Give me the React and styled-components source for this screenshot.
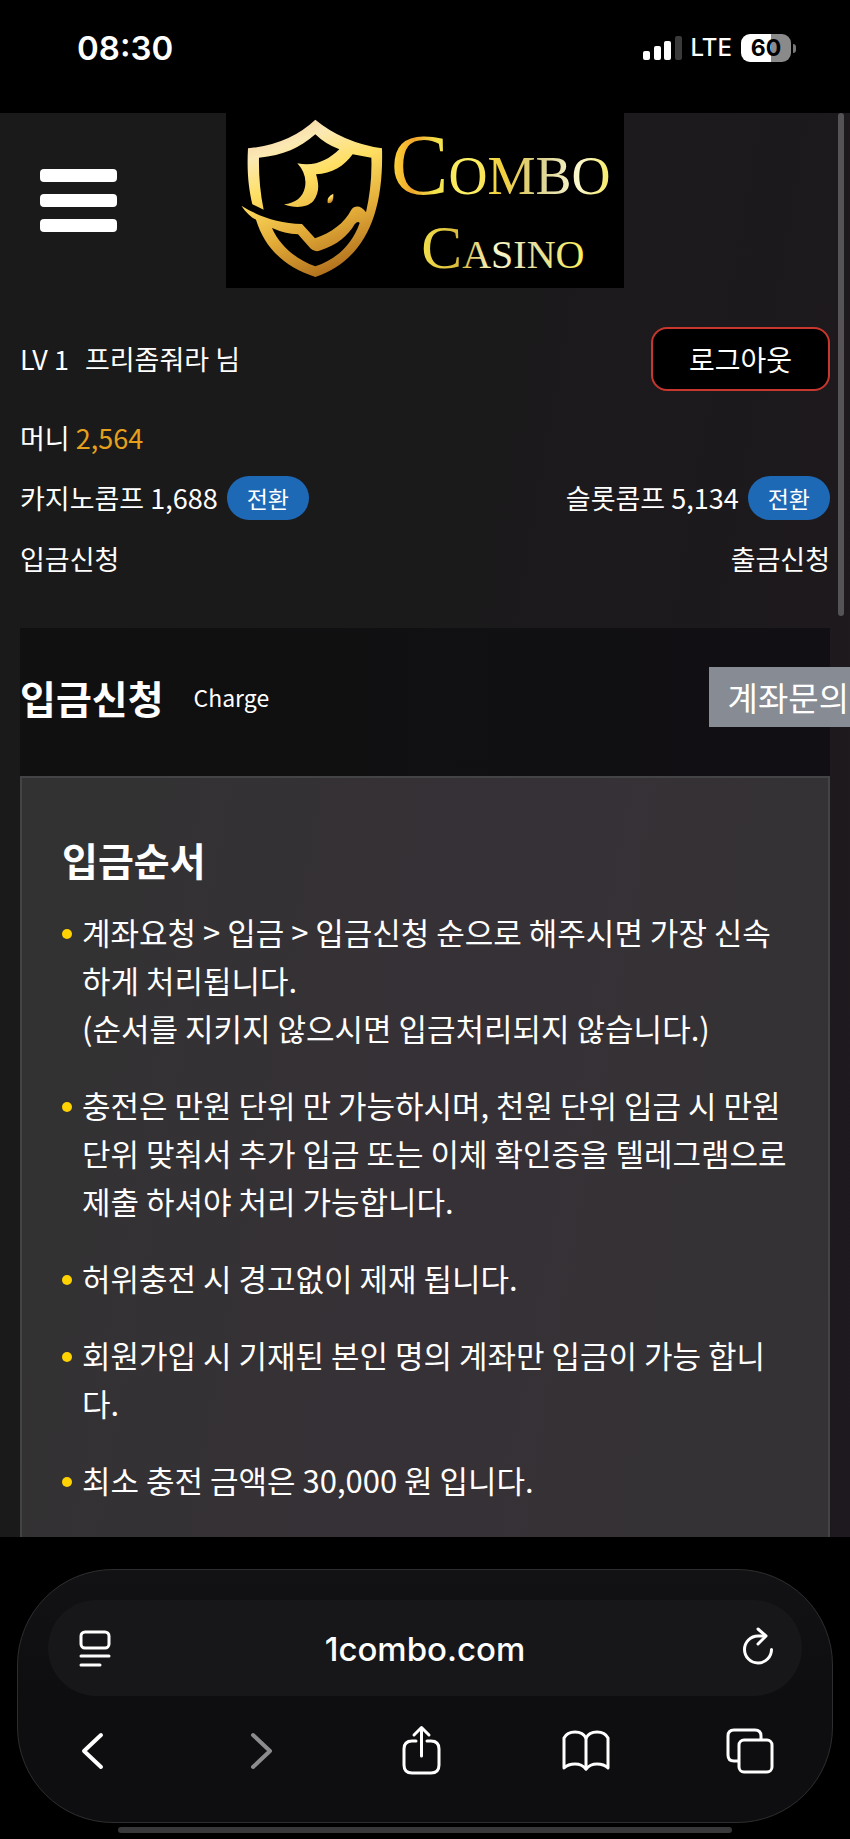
import React from "react";
import styled, { createGlobalStyle } from "styled-components";

const steps = [
  ["계좌요청 > 입금 > 입금신청 순으로 해주시면 가장 신속하게 처리됩니다.", "(순서를 지키지 않으시면 입금처리되지 않습니다.)"],
  ["충전은 만원 단위 만 가능하시며, 천원 단위 입금 시 만원 단위 맞춰서 추가 입금 또는 이체 확인증을 텔레그램으로 제출 하셔야 처리 가능합니다."],
  ["허위충전 시 경고없이 제재 됩니다."],
  ["회원가입 시 기재된 본인 명의 계좌만 입금이 가능 합니다."],
  ["최소 충전 금액은 30,000 원 입니다."],
];

function Logo() {
  return (
    <LogoSvg viewBox="18 24 1194 525" role="img" aria-label="Combo Casino">
      <defs>
        <linearGradient id="shield" x1="0.15" y1="0" x2="0.5" y2="1">
          <stop offset="0" stopColor="#f3c9a0" />
          <stop offset="0.2" stopColor="#fbe9b4" />
          <stop offset="0.42" stopColor="#ffdf62" />
          <stop offset="0.72" stopColor="#e3ac38" />
          <stop offset="1" stopColor="#b4741f" />
        </linearGradient>
        <linearGradient id="gold" gradientUnits="userSpaceOnUse" x1="510" y1="200" x2="1180" y2="240">
          <stop offset="0" stopColor="#ffd93a" />
          <stop offset="0.1" stopColor="#f0a52c" />
          <stop offset="0.2" stopColor="#f3e04a" />
          <stop offset="0.36" stopColor="#fff26a" />
          <stop offset="0.5" stopColor="#f2cf3c" />
          <stop offset="0.66" stopColor="#d9cf8a" />
          <stop offset="0.84" stopColor="#fbf8cf" />
          <stop offset="1" stopColor="#f6e95a" />
        </linearGradient>
        <linearGradient id="paleGold" gradientUnits="userSpaceOnUse" x1="600" y1="420" x2="1095" y2="420">
          <stop offset="0" stopColor="#f3e04a" />
          <stop offset="0.25" stopColor="#d8b83c" />
          <stop offset="0.45" stopColor="#fbf8cf" />
          <stop offset="0.7" stopColor="#e6dfa0" />
          <stop offset="1" stopColor="#fff05a" />
        </linearGradient>
      </defs>
      <path
        fill="url(#shield)"
        fillRule="evenodd"
        d="M286 44 Q208 118 84 130 C80 200 86 250 97 298 L131 314 C120 260 116 210 117 158 C190 152 240 128 286 88
           Q315 117 358 133 C324 166 284 186 232 175 Q262 208 255 246 C249 278 226 294 192 298 C226 311 262 308 280 288
           C299 262 297 236 288 208 C336 206 372 184 398 148 L454 158 C456 216 450 268 438 322 C424 300 404 300 394 314
           C372 356 334 382 285 400 L246 357 C176 354 118 336 64 302 C78 322 92 336 108 344 C134 428 190 484 286 516
           C430 466 492 334 486 130 Q368 112 286 44 Z
           M156 369 Q194 386 234 388 L271 430 Q284 444 302 436 C352 420 384 392 404 358 Q414 346 419 354
           C396 420 350 462 286 484 C230 464 180 424 156 369 Z"
      />
      <path fill="url(#shield)" d="M340 266 Q319 276 323 294 Q342 298 340 266 Z" />
      <LogoText x="512" y="266" fontSize="162" fill="url(#gold)">
        <tspan fontSize="260">C</tspan>OMBO
      </LogoText>
      <LogoText x="604" y="488" fontSize="120" fill="url(#paleGold)">
        <tspan fontSize="184">C</tspan>ASINO
      </LogoText>
    </LogoSvg>
  );
}

function StatusBar() {
  return (
    <Status>
      <Time>08:30</Time>
      <Signals>
        <svg width="39" height="26" viewBox="0 0 39 26" aria-hidden="true">
          <rect x="0" y="16" width="7" height="9" rx="2" fill="#fff" />
          <rect x="11" y="11" width="7" height="14" rx="2" fill="#fff" />
          <rect x="21" y="6" width="7" height="19" rx="2" fill="#fff" />
          <rect x="32" y="1" width="7" height="24" rx="2" fill="#3a3a3a" />
        </svg>
        <Network>LTE</Network>
        <Battery>
          <Level>60</Level>
          <BatteryCap />
        </Battery>
      </Signals>
    </Status>
  );
}

function BrowserBar() {
  return (
    <Bottom>
      <Bar>
        <Address>
          <IconButton aria-label="페이지 메뉴">
            <svg width="48" height="48" viewBox="0 0 48 48">
              <rect x="11" y="7" width="28" height="16" rx="4" />
              <path d="M11 31h28M11 40h19" />
            </svg>
          </IconButton>
          <Url aria-label="주소" defaultValue="1combo.com" />
          <IconButton aria-label="새로고침">
            <svg width="48" height="48" viewBox="0 0 48 48">
              <path d="M33 11H26a13.500 13.500 0 1 0 13.500 13.500" />
              <path d="M26 4l8 7-8 8" />
            </svg>
          </IconButton>
        </Address>
        <Tools>
          <IconButton aria-label="뒤로" $stroke={4}>
            <svg width="48" height="48" viewBox="0 0 48 48">
              <path d="M32 8L15 24l17 16" />
            </svg>
          </IconButton>
          <IconButton aria-label="앞으로" $stroke={4} $dim>
            <svg width="48" height="48" viewBox="0 0 48 48">
              <path d="M20 8l17 16-17 16" />
            </svg>
          </IconButton>
          <IconButton aria-label="공유">
            <svg width="48" height="48" viewBox="0 0 48 48">
              <path d="M18 14h-4q-8 0-8 8v16q0 8 8 8h19q8 0 8-8v-16q0-8-8-8h-4" />
              <path d="M23.500 29V1M16 8l7.500-7.500L31 8" />
            </svg>
          </IconButton>
          <IconButton aria-label="책갈피">
            <svg width="48" height="48" viewBox="0 0 48 48">
              <path d="M24 11Q21 5 13 5T2 11v30q4-4 11-4t11 5q4-5 11-5t11 4V11q-3-6-11-6T24 11z" />
              <path d="M24 11v31" />
            </svg>
          </IconButton>
          <IconButton aria-label="탭">
            <svg width="48" height="48" viewBox="0 0 48 48">
              <rect x="13" y="13" width="33" height="32" rx="5" />
              <path d="M35 12V9q0-6-6-6H8Q2 3 2 9v19q0 6 6 6h4" />
            </svg>
          </IconButton>
        </Tools>
      </Bar>
      <HomeIndicator />
    </Bottom>
  );
}

function App() {
  return (
    <>
      <GlobalStyle />
      <Screen>
        <StatusBar />
        <Site>
          <Header>
            <MenuButton aria-label="메뉴">
              <MenuLine />
              <MenuLine />
              <MenuLine />
            </MenuButton>
            <LogoLink href="#">
              <Logo />
            </LogoLink>
          </Header>

          <Account>
            <Row $height={64}>
              <User>
                <span>LV 1</span>
                <span>프리좀줘라 님</span>
              </User>
              <Logout>로그아웃</Logout>
            </Row>
            <Row $height={94}>
              <span>
                머니 <Money>2,564</Money>
              </span>
            </Row>
            <Row $height={26}>
              <Comp>
                카지노콤프 1,688 <Convert>전환</Convert>
              </Comp>
              <Comp>
                슬롯콤프 5,134 <Convert>전환</Convert>
              </Comp>
            </Row>
            <Row $height={96}>
              <MenuLink href="#">입금신청</MenuLink>
              <MenuLink href="#">출금신청</MenuLink>
            </Row>
          </Account>

          <Charge>
            <ChargeHead>
              <Title>입금신청</Title>
              <SubTitle>Charge</SubTitle>
              <Inquiry>계좌문의</Inquiry>
            </ChargeHead>
            <Panel>
              <Title as="h2">입금순서</Title>
              <Steps>
                {steps.map((lines, i) => (
                  <Step key={i}>
                    {lines.map((line) => (
                      <p key={line}>{line}</p>
                    ))}
                  </Step>
                ))}
              </Steps>
            </Panel>
          </Charge>
          <Scrollbar />
        </Site>
        <BrowserBar />
      </Screen>
    </>
  );
}

const GlobalStyle = createGlobalStyle`
  * {
    box-sizing: border-box;
  }

  body {
    margin: 0;
    background: #000;
    color: #fff;
    font-family: "Noto Sans CJK KR", sans-serif;
    font-size: 27px;
    line-height: 40px;
  }

  button, input {
    font: inherit;
    color: inherit;
    padding: 0;
    border: 0;
    background: none;
  }

  a {
    color: inherit;
    text-decoration: none;
  }

  h1, h2, p, ul {
    margin: 0;
    padding: 0;
  }
`;

const Screen = styled.div`
  display: flex;
  flex-direction: column;
  min-height: 100vh;
`;

const Status = styled.div`
  display: flex;
  justify-content: space-between;
  align-items: center;
  height: 113px;
  padding: 0 54px 17px 77px;
  font-family: Inter, sans-serif;
`;

const Time = styled.span`
  font-size: 33px;
  font-weight: 600;
`;

const Signals = styled.div`
  display: flex;
  align-items: center;
  gap: 9px;
`;

const Network = styled.span`
  font-size: 24px;
  font-weight: 500;
`;

const Battery = styled.div`
  display: flex;
  align-items: center;
  gap: 2px;
`;

const Level = styled.span`
  width: 50px;
  border-radius: 9px;
  background: linear-gradient(90deg, #fff 60%, #8a8a8a 60%);
  color: #000;
  font-size: 23px;
  font-weight: 700;
  line-height: 28px;
  text-align: center;
`;

const BatteryCap = styled.span`
  width: 3px;
  height: 9px;
  border-radius: 0 4px 4px 0;
  background: #777;
`;

const Site = styled.main`
  position: relative;
  display: flex;
  flex: 1;
  flex-direction: column;
  overflow: hidden;
  background: linear-gradient(100deg, #1a1a1a, #1b1a1b 45%, #1e191e);
`;

const Header = styled.header`
  display: grid;
  grid-template-columns: 1fr 398px 1fr;
  align-items: center;
`;

const MenuButton = styled.button`
  display: flex;
  flex-direction: column;
  gap: 12px;
  width: 77px;
  margin-left: 40px;
`;

const MenuLine = styled.span`
  width: 100%;
  height: 13px;
  border-radius: 4px;
  background: #fff;
`;

const LogoLink = styled.a`
  display: block;
  background: #000;
`;

const LogoSvg = styled.svg`
  display: block;
  width: 100%;
`;

const LogoText = styled.text`
  font-family: "Liberation Serif", serif;
`;

const Account = styled.section`
  display: flex;
  flex-direction: column;
  padding: 39px 20px 21px;
`;

const Row = styled.div`
  display: flex;
  justify-content: space-between;
  align-items: center;
  height: ${(props) => props.$height}px;
`;

const User = styled.div`
  display: flex;
  gap: 16px;
`;

const Logout = styled.button`
  height: 64px;
  padding: 0 36px;
  border: 2px solid #c8372d;
  border-radius: 16px;
  background: #000;
  font-size: 28px;
`;

const Money = styled.span`
  color: #e5a11c;
`;

const Comp = styled.div`
  display: flex;
  align-items: center;
  gap: 9px;
`;

const Convert = styled.button`
  height: 44px;
  padding: 0 20px;
  border-radius: 22px;
  background: #1e69b6;
  font-size: 23px;
`;

const MenuLink = styled.a`
  display: block;
`;

const Charge = styled.section`
  display: flex;
  flex: 1;
  flex-direction: column;
  margin: 0 20px;
`;

const ChargeHead = styled.div`
  display: flex;
  align-items: center;
  height: 148px;
  padding-bottom: 10px;
  background: linear-gradient(90deg, #101010, #110f13);
`;

const Title = styled.h1`
  font-size: 39px;
  font-weight: 700;
  line-height: 56px;
`;

const SubTitle = styled.span`
  margin-left: 30px;
  font-size: 23px;
`;

const Inquiry = styled.button`
  flex-shrink: 0;
  height: 60px;
  margin-left: auto;
  margin-right: -38px;
  padding: 0 19px;
  background: #878b93;
  font-size: 33px;
`;

const Panel = styled.div`
  flex: 1;
  padding: 53px 40px 24px;
  border: 2px solid #444346;
  border-bottom: 0;
  background: linear-gradient(100deg, #323232, #363136 50%, #343235);
`;

const Steps = styled.ul`
  display: flex;
  flex-direction: column;
  gap: 29px;
  margin-top: 21px;
  list-style: none;
`;

const Step = styled.li`
  position: relative;
  padding-left: 20px;
  font-size: 31px;
  line-height: 48px;

  &::before {
    content: "";
    position: absolute;
    top: 21px;
    left: 0;
    width: 10px;
    height: 10px;
    border-radius: 50%;
    background: #ffd200;
  }
`;

const Scrollbar = styled.div`
  position: absolute;
  top: 0;
  right: 6px;
  width: 6px;
  height: 503px;
  border-radius: 3px;
  background: #555355;
`;

const Bottom = styled.footer`
  display: flex;
  flex-direction: column;
  align-items: center;
  padding: 32px 17px 6px;
`;

const Bar = styled.div`
  width: 100%;
  padding: 30px;
  border: 1px solid #2e2e30;
  border-radius: 96px;
  background: linear-gradient(#121214, #0e0e10 50%);
`;

const Address = styled.div`
  display: flex;
  align-items: center;
  height: 96px;
  padding: 2px 22px 0;
  border-radius: 48px;
  background: #171719;
`;

const Url = styled.input`
  flex: 1;
  min-width: 0;
  font-family: Inter, sans-serif;
  font-size: 33px;
  font-weight: 500;
  text-align: center;
`;

const Tools = styled.nav`
  display: flex;
  justify-content: space-between;
  margin-top: 31px;
  padding: 0 28px 17px 21px;
`;

const IconButton = styled.button`
  width: 48px;
  height: 48px;
  color: ${(props) => (props.$dim ? "#8c8c8e" : "#fff")};

  svg {
    display: block;
    overflow: visible;
    fill: none;
    stroke: currentColor;
    stroke-width: ${(props) => props.$stroke || 3};
    stroke-linecap: round;
    stroke-linejoin: round;
  }
`;

const HomeIndicator = styled.div`
  width: 614px;
  max-width: 80%;
  height: 6px;
  margin-top: 4px;
  border-radius: 3px;
  background: #38383a;
`;

export default App;
